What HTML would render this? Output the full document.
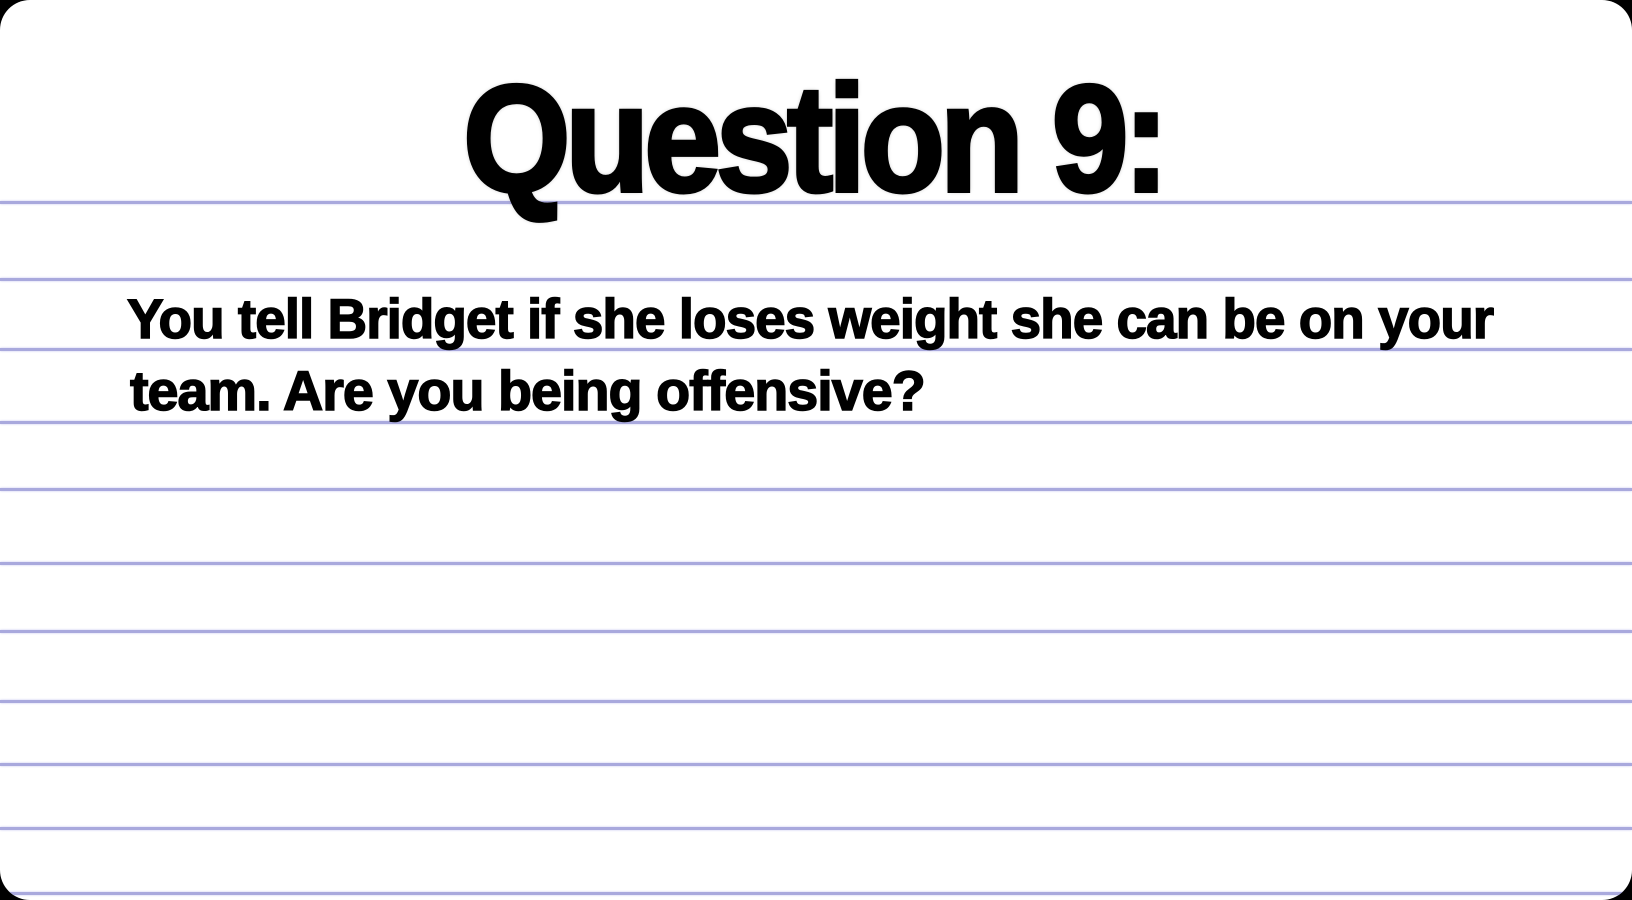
<!DOCTYPE html>
<html><head><style>
html,body{margin:0;padding:0;width:1632px;height:900px;overflow:hidden;background:#000}
.card{position:absolute;left:0;top:0;width:1632px;height:900px;background:#fff;border-radius:30px;overflow:hidden}
.ln{position:absolute;left:0;width:1632px;height:3px;background:#a9a9dd;box-shadow:0 0 2px #c8c8ee}
.t{position:absolute;font-family:"Liberation Sans",sans-serif;font-weight:bold;color:#000;white-space:nowrap;transform-origin:0 0}
</style></head><body><div class="card">
<div class="ln" style="top:201px"></div>
<div class="ln" style="top:278px"></div>
<div class="ln" style="top:348px"></div>
<div class="ln" style="top:421px"></div>
<div class="ln" style="top:488px"></div>
<div class="ln" style="top:562px"></div>
<div class="ln" style="top:630px"></div>
<div class="ln" style="top:700px"></div>
<div class="ln" style="top:763px"></div>
<div class="ln" style="top:827px"></div>
<div class="ln" style="top:892px"></div>
<div class="t" style="left:463px;top:52px;font-size:152px;letter-spacing:-6px;transform:scaleX(0.91);-webkit-text-stroke:4px #000;text-shadow:0 0 5px #888">Question 9:</div>
<div class="t" style="left:127px;top:286px;font-size:56px;letter-spacing:-1px;transform:scaleX(0.98);-webkit-text-stroke:1.5px #000">You tell Bridget if she loses weight she can be on your</div>
<div class="t" style="left:130px;top:358px;font-size:56px;letter-spacing:-1px;transform:scaleX(0.995);-webkit-text-stroke:1.5px #000">team. Are you being offensive?</div>
</div></body></html>
